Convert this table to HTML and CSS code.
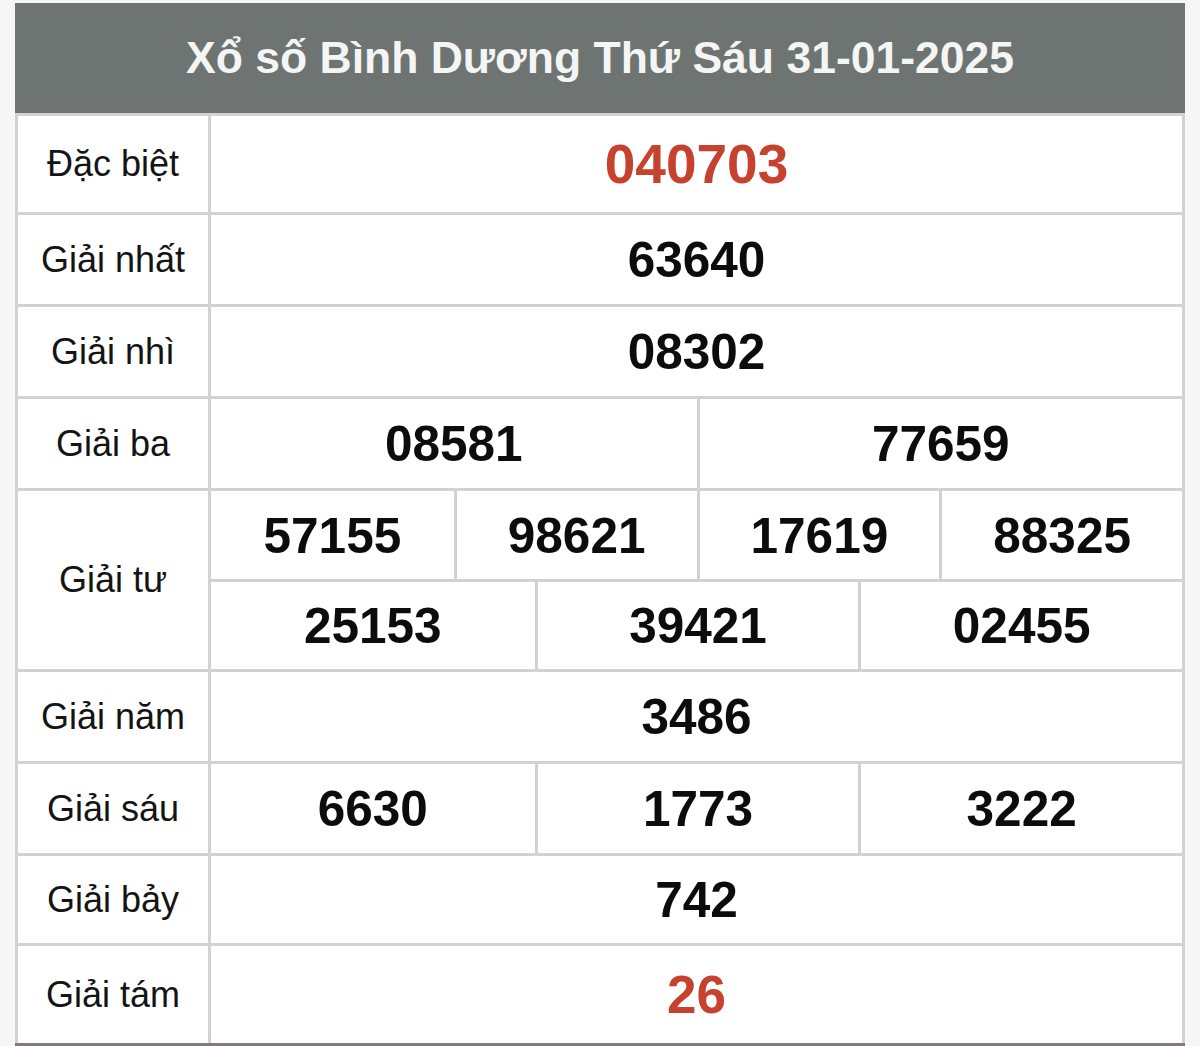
FILE: index.html
```html
<!DOCTYPE html>
<html lang="vi">
<head>
<meta charset="utf-8">
<title>Xổ số Bình Dương</title>
<link rel="stylesheet" href="styles.css">
</head>
<body>
<div class="board">
  <div class="title">Xổ số Bình Dương Thứ Sáu 31-01-2025</div>

  <div class="row row-db">
    <div class="label">Đặc biệt</div>
    <div class="vals c1"><div class="num red big">040703</div></div>
  </div>

  <div class="row h89">
    <div class="label">Giải nhất</div>
    <div class="vals c1"><div class="num">63640</div></div>
  </div>

  <div class="row h89">
    <div class="label">Giải nhì</div>
    <div class="vals c1"><div class="num">08302</div></div>
  </div>

  <div class="row h89">
    <div class="label">Giải ba</div>
    <div class="vals c2"><div class="num">08581</div><div class="num">77659</div></div>
  </div>

  <div class="row">
    <div class="label">Giải tư</div>
    <div class="stack">
      <div class="vals c4 h88">
        <div class="num">57155</div><div class="num">98621</div><div class="num">17619</div><div class="num">88325</div>
      </div>
      <div class="vals c3 h87 sub">
        <div class="num">25153</div><div class="num">39421</div><div class="num">02455</div>
      </div>
    </div>
  </div>

  <div class="row h89">
    <div class="label">Giải năm</div>
    <div class="vals c1"><div class="num">3486</div></div>
  </div>

  <div class="row h89">
    <div class="label">Giải sáu</div>
    <div class="vals c3"><div class="num">6630</div><div class="num">1773</div><div class="num">3222</div></div>
  </div>

  <div class="row h87">
    <div class="label">Giải bảy</div>
    <div class="vals c1"><div class="num">742</div></div>
  </div>

  <div class="row row-last">
    <div class="label">Giải tám</div>
    <div class="vals c1"><div class="num red mid">26</div></div>
  </div>
</div>
</body>
</html>
```

FILE: styles.css
```css
html, body {
  margin: 0;
  padding: 0;
  background: #f6f6f6;
}

body {
  font-family: "Liberation Sans", Arial, sans-serif;
  color: #111;
}

.board {
  width: 1170px;
  margin: 3px 0 0 15px;
  background: #fff;
  border-bottom: 3px solid #857a76;
}

.title {
  height: 110px;
  background: #6d7471;
  color: #f5f5f5;
  font-weight: bold;
  font-size: 44.5px;
  display: flex;
  align-items: center;
  justify-content: center;
}

.row {
  display: grid;
  grid-template-columns: 193px 1fr;
  border-top: 3px solid #d2d2d2;
  border-left: 3px solid #d2d2d2;
  border-right: 3px solid #d2d2d2;
}

.row-db { height: 96px; }
.h89 { height: 89px; }
.h88 { height: 88px; }
.h87 { height: 87px; }
.row-last { height: 97px; }

.label {
  display: flex;
  align-items: center;
  justify-content: center;
  font-size: 36px;
  border-right: 3px solid #d2d2d2;
  color: #141414;
}

.stack {
  display: flex;
  flex-direction: column;
}

.vals {
  display: grid;
}

.vals.sub {
  border-top: 3px solid #d2d2d2;
}

.c1 { grid-template-columns: 1fr; }
.c2 { grid-template-columns: 1fr 1fr; }
.c3 { grid-template-columns: 1fr 1fr 1fr; }
.c4 { grid-template-columns: 1fr 1fr 1fr 1fr; }

.num {
  display: flex;
  align-items: center;
  justify-content: center;
  font-weight: bold;
  font-size: 49.5px;
  color: #0c0c0c;
  border-left: 3px solid #d2d2d2;
}

.num:first-child {
  border-left: none;
}

.num.red {
  color: #c7412f;
}

.num.big {
  font-size: 55px;
}

.num.mid {
  font-size: 53px;
}
```
